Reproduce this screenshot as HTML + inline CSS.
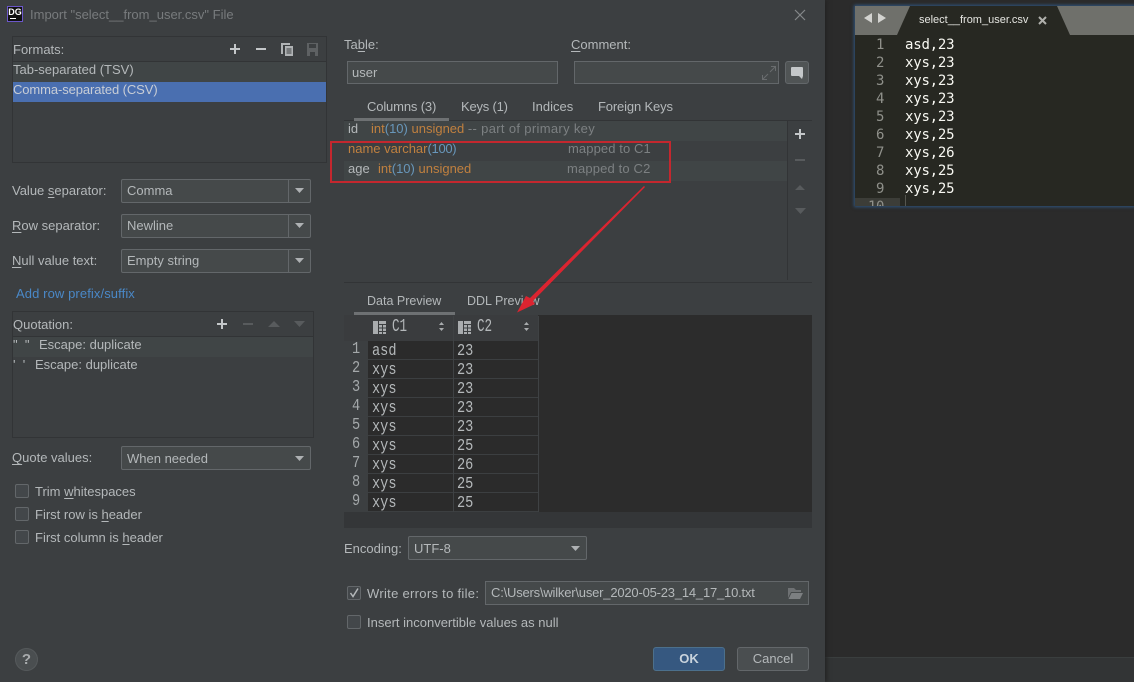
<!DOCTYPE html>
<html><head><meta charset="utf-8"><style>
html,body{margin:0;padding:0;background:#2b2b2b}
#p{position:relative;width:1134px;height:682px;overflow:hidden;background:#2b2b2b;font:13px/16px "Liberation Sans","Noto Sans CJK SC",sans-serif;color:#b4b8ba;letter-spacing:0}
#p div,#p span.a,#p svg{position:absolute}
.t{white-space:nowrap}
.b{box-sizing:border-box;border:1px solid #63676a;border-radius:2px;background:#45494a}
.o{color:#c0803f}.n{color:#6897bb}.g{color:#7c8082}
.c{font:14px/18px "DejaVu Sans Mono","Liberation Mono",monospace;letter-spacing:-.4px;color:#a9b7c6}
.gm{font:17px/19px "Liberation Mono",monospace;white-space:pre;transform:scaleX(.8);transform-origin:0 0;color:#b4b8ba}
u{text-underline-offset:2px}
.ck{box-sizing:border-box;width:14px;height:14px;border:1px solid #63676a;border-radius:2px;background:#43474a}
</style></head><body><div id="p">

<div style="left:825px;top:0;width:309px;height:682px;background:#2b2b2b"></div>
<div style="left:825px;top:657px;width:309px;height:25px;background:#323435;border-top:1px solid #3a3e3e;box-sizing:border-box"></div>

<div style="left:855px;top:6px;width:279px;height:200px;background:#272822;box-shadow:0 0 3px 1px #2f557f"></div>
<div style="left:855px;top:6px;width:279px;height:29px;background:#6f706b"></div>
<svg style="left:855px;top:6px" width="279" height="29"><path d="M42 29 L55 0 H202 L215 29Z" fill="#272822"/><path d="M9 12 L17 7 V17Z M23 7 L31 12 L23 17Z" fill="#d3d3d0"/><path d="M184 11l7 7m0-7l-7 7" stroke="#b0b0ac" stroke-width="2"/></svg>
<div class="t" style="left:919px;top:12px;font-size:11px;letter-spacing:0;color:#e6e6e2">select__from_user.csv</div>
<div style="left:855px;top:198px;width:45px;height:8px;background:#3c3d38"></div>
<div style="left:905px;top:195px;width:1px;height:11px;background:#55564f"></div>
<div class="t" style="left:855px;top:36px;width:279px;height:170px;overflow:hidden;position:absolute;background:none">
<div class="c" style="left:0;top:0;width:29px;text-align:right;color:#8f908a;white-space:pre;line-height:18px">1
2
3
4
5
6
7
8
9
10</div>
<div class="c" style="left:50px;top:0;color:#f8f8f2;white-space:pre;line-height:18px;letter-spacing:-.2px">asd,23
xys,23
xys,23
xys,23
xys,23
xys,25
xys,26
xys,25
xys,25</div></div>

<div style="left:0;top:0;width:825px;height:682px;background:#3c3f41;box-shadow:2px 0 4px #242424"></div>

<div style="left:7px;top:6px;width:16px;height:16px;box-sizing:border-box;border:1px solid #6b57c9;background:#111;color:#fff;font:bold 9px/11px 'Liberation Sans',sans-serif;letter-spacing:0;text-align:center">DG<div style="left:2px;top:11px;width:6px;height:1px;background:#fff"></div></div>
<div class="t" style="left:30px;top:7px;color:#787b7d">Import "select__from_user.csv" File</div>
<svg style="left:793px;top:8px" width="14" height="14"><path d="M2 2l10 10m0-10L2 12" stroke="#85888a" stroke-width="1.2"/></svg>

<div style="left:12px;top:36px;width:315px;height:127px;box-sizing:border-box;border:1px solid #323436"></div>
<div style="left:13px;top:61px;width:313px;height:1px;background:#323436"></div>
<div style="left:13px;top:62px;width:313px;height:20px;background:#404546"></div>
<div style="left:13px;top:82px;width:313px;height:20px;background:#4a6fb0"></div>
<div class="t" style="left:13px;top:42px">Formats:</div>
<div class="t" style="left:13px;top:62px">Tab-separated (TSV)</div>
<div class="t" style="left:13px;top:82px;color:#c8cdd5;letter-spacing:-.1px">Comma-separated (CSV)</div>
<svg style="left:228px;top:40px" width="94" height="18"><path d="M7 4v10M2 9h10" stroke="#c4c7c9" stroke-width="2"/><path d="M28 9h10" stroke="#c4c7c9" stroke-width="2"/>
<path d="M53 3h9v2h-7v9h-2z" fill="#b0b3b5"/><path d="M57 6h8v10h-8z" fill="#b0b3b5"/><path d="M58.500 9h5M58.500 11h5M58.500 13h5" stroke="#3c3f41"/>
<path d="M79 3h11v13H79z" fill="#5e6163"/><path d="M81 4h7v4h-7zM82 12h5v4h-5z" fill="#3c3f41"/></svg>

<div class="t" style="left:12px;top:183px"><span>Value <u>s</u>eparator:</span></div>
<div class="t" style="left:12px;top:218px"><u>R</u>ow separator:</div>
<div class="t" style="left:12px;top:253px"><u>N</u>ull value text:</div>

<div class="b" style="left:121px;top:179px;width:190px;height:24px"></div><div style="left:288px;top:180px;width:1px;height:22px;background:#63676a"></div>
<div class="t" style="left:127px;top:183px">Comma</div>
<div class="b" style="left:121px;top:214px;width:190px;height:24px"></div><div style="left:288px;top:215px;width:1px;height:22px;background:#63676a"></div>
<div class="t" style="left:127px;top:218px">Newline</div>
<div class="b" style="left:121px;top:249px;width:190px;height:24px"></div><div style="left:288px;top:250px;width:1px;height:22px;background:#63676a"></div>
<div class="t" style="left:127px;top:253px">Empty string</div>
<svg style="left:295px;top:188px" width="10" height="80"><path d="M0 0h9l-4.500 5zM0 35h9l-4.500 5zM0 70h9l-4.500 5z" fill="#aeb1b3"/></svg>

<div class="t" style="left:16px;top:286px;color:#4a88c7;letter-spacing:.1px">Add row prefix/suffix</div>

<div style="left:12px;top:311px;width:302px;height:127px;box-sizing:border-box;border:1px solid #323436"></div>
<div style="left:13px;top:336px;width:300px;height:1px;background:#323436"></div>
<div style="left:13px;top:337px;width:300px;height:20px;background:#404546"></div>
<div class="t" style="left:13px;top:317px">Quotation:</div>
<div class="t" style="left:13px;top:337px;white-space:pre">"  "</div>
<div class="t" style="left:39px;top:337px">Escape: duplicate</div>
<div class="t" style="left:13px;top:357px;white-space:pre">'  '</div>
<div class="t" style="left:35px;top:357px">Escape: duplicate</div>
<svg style="left:215px;top:315px" width="94" height="18"><path d="M7 4v10M2 9h10" stroke="#c4c7c9" stroke-width="2"/><path d="M28 9h10" stroke="#585b5d" stroke-width="2"/><path d="M53 12l6-6 6 6zM79 6h11l-5.500 6z" fill="#585b5d"/></svg>

<div class="t" style="left:12px;top:450px"><u>Q</u>uote values:</div>
<div class="b" style="left:121px;top:446px;width:190px;height:24px"></div>
<div class="t" style="left:127px;top:451px">When needed</div>
<svg style="left:295px;top:456px" width="10" height="6"><path d="M0 0h9l-4.500 5z" fill="#aeb1b3"/></svg>

<div class="ck" style="left:15px;top:484px"></div><div class="t" style="left:35px;top:484px">Trim <u>w</u>hitespaces</div>
<div class="ck" style="left:15px;top:507px"></div><div class="t" style="left:35px;top:507px">First row is <u>h</u>eader</div>
<div class="ck" style="left:15px;top:530px"></div><div class="t" style="left:35px;top:530px">First column is <u>h</u>eader</div>

<div style="left:15px;top:648px;width:23px;height:23px;border-radius:50%;background:#4a4e50;border:0;box-shadow:inset 0 0 0 1px #55595b;color:#a8abad;font:bold 15px/23px 'Liberation Sans',sans-serif;text-align:center">?</div>

<div class="t" style="left:344px;top:37px">Ta<u>b</u>le:</div>
<div class="t" style="left:571px;top:37px"><u>C</u>omment:</div>
<div class="b" style="left:347px;top:61px;width:211px;height:23px;border-radius:0"></div>
<div class="t" style="left:352px;top:65px">user</div>
<div class="b" style="left:574px;top:61px;width:205px;height:23px;border-radius:0"></div>
<svg style="left:761px;top:65px" width="16" height="16"><path d="M9 7l5-5M10 1.500h4.500V6M7 9l-5 5M1.500 10v4.500H6" stroke="#696c6e" fill="none"/></svg>
<div class="b" style="left:785px;top:61px;width:24px;height:23px;border-radius:3px;background:#505455"></div>
<svg style="left:790px;top:66px" width="14" height="14"><path d="M2 1h10a1 1 0 0 1 1 1v8l-1 3-3-3H2a1 1 0 0 1-1-1V2a1 1 0 0 1 1-1z" fill="#c4c7c9"/></svg>

<div class="t" style="left:367px;top:99px;letter-spacing:-.15px">Columns (3)</div>
<div class="t" style="left:461px;top:99px;letter-spacing:-.2px">Keys (1)</div>
<div class="t" style="left:532px;top:99px">Indices</div>
<div class="t" style="left:598px;top:99px;letter-spacing:-.15px">Foreign Keys</div>
<div style="left:344px;top:120px;width:468px;height:1px;background:#323436"></div>
<div style="left:354px;top:118px;width:95px;height:3px;background:#6e7173"></div>

<div style="left:344px;top:121px;width:443px;height:20px;background:#404546"></div>
<div style="left:344px;top:161px;width:443px;height:20px;background:#404546"></div>
<div style="left:787px;top:121px;width:1px;height:159px;background:#323436"></div>
<div style="left:344px;top:282px;width:468px;height:1px;background:#323436"></div>
<svg style="left:792px;top:126px" width="16" height="94"><path d="M8 3v10M3 8h10" stroke="#c4c7c9" stroke-width="2"/><path d="M3 34h10" stroke="#585b5d" stroke-width="2"/><path d="M3 64l5-5 5 5zM3 82h11l-5.500 6z" fill="#585b5d"/></svg>

<div class="t" style="left:348px;top:121px">id</div>
<div class="t" style="left:371px;top:121px"><span class="o">int</span><span class="n">(10)</span> <span class="o">unsigned</span> <span class="g" style="letter-spacing:.33px">-- part of primary key</span></div>
<div class="t" style="left:348px;top:141px"><span class="o">name varchar</span><span class="n" style="letter-spacing:-.3px">(100)</span></div>
<div class="t g" style="left:568px;top:141px;letter-spacing:.1px">mapped to C1</div>
<div class="t" style="left:348px;top:161px">age</div>
<div class="t" style="left:378px;top:161px"><span class="o">int</span><span class="n">(10)</span> <span class="o">unsigned</span></div>
<div class="t g" style="left:567px;top:161px;letter-spacing:.15px">mapped to C2</div>

<div class="t" style="left:367px;top:293px;font-size:12.500px">Data Preview</div>
<div class="t" style="left:467px;top:293px;font-size:12.500px">DDL Preview</div>
<div style="left:354px;top:312px;width:101px;height:3px;background:#6e7173"></div>

<div style="left:344px;top:315px;width:468px;height:213px;background:#2c2c2c"></div>
<div style="left:344px;top:512px;width:468px;height:16px;background:#343638"></div>
<div style="left:344px;top:315px;width:194px;height:26px;background:#3a3c3e"></div>
<div style="left:344px;top:341px;width:24px;height:171px;background:#3c3f41"></div>
<div style="left:368px;top:341px;width:170px;height:171px;background:#2b2b2b;background-image:repeating-linear-gradient(to bottom,transparent 0,transparent 18px,#3c3f41 18px,#3c3f41 19px)"></div>
<div style="left:453px;top:316px;width:1px;height:196px;background:#3f4244"></div>
<div style="left:538px;top:316px;width:1px;height:196px;background:#3f4244"></div>

<svg style="left:372px;top:320px" width="160" height="14"><g fill="#a9acae"><path d="M1 1h5v13H1z"/><path d="M7 1h7v13H7z"/></g><path d="M7 4.500h7M7 8h7M7 11.500h7M10.500 4v10" stroke="#3c3f41"/><g transform="translate(85,0)"><g fill="#a9acae"><path d="M1 1h5v13H1z"/><path d="M7 1h7v13H7z"/></g><path d="M7 4.500h7M7 8h7M7 11.500h7M10.500 4v10" stroke="#3c3f41"/></g><path d="M67 5l2.500-3L72 5zM67 8h5l-2.500 3zM152 5l2.500-3L157 5zM152 8h5l-2.500 3z" fill="#a9acae"/></svg>
<div class="gm t" style="left:392px;top:318px;font-size:18px;transform:scaleX(.7)">C1</div>
<div class="gm t" style="left:477px;top:318px;font-size:18px;transform:scaleX(.7)">C2</div>

<div class="gm t" style="left:352px;top:340px;color:#a4a8aa">1
2
3
4
5
6
7
8
9</div>
<div class="gm t" style="left:372px;top:342px">asd
xys
xys
xys
xys
xys
xys
xys
xys</div>
<div class="gm t" style="left:457px;top:342px">23
23
23
23
23
25
26
25
25</div>

<div class="t" style="left:344px;top:541px">Encoding:</div>
<div class="b" style="left:408px;top:536px;width:179px;height:24px"></div>
<div class="t" style="left:414px;top:541px">UTF-8</div>
<svg style="left:571px;top:546px" width="10" height="6"><path d="M0 0h9l-4.500 5z" fill="#aeb1b3"/></svg>

<div class="ck" style="left:347px;top:586px"></div>
<svg style="left:349px;top:587px" width="11" height="12"><path d="M1.500 6l2.500 3.500L9 1.500" stroke="#b4b8ba" stroke-width="1.500" fill="none"/></svg>
<div class="t" style="left:367px;top:586px;letter-spacing:.3px">Write errors to file:</div>
<div class="b" style="left:485px;top:581px;width:324px;height:24px;border-radius:0"></div>
<div class="t" style="left:491px;top:585px;letter-spacing:-.2px">C:\Users\wilker\user_2020-05-23_14_17_10.txt</div>
<svg style="left:787px;top:586px" width="17" height="14"><path d="M1 2h6l2 2h5v2H4L1 12z" fill="#6e7173"/><path d="M4.500 7H16l-3 6H1.500z" fill="#7c7f81"/></svg>
<div class="ck" style="left:347px;top:615px"></div>
<div class="t" style="left:367px;top:615px">Insert inconvertible values as null</div>

<div style="left:653px;top:647px;width:72px;height:24px;box-sizing:border-box;border:1px solid #4c708c;border-radius:3px;background:#365880;color:#c9d3dc;font-weight:bold;text-align:center;line-height:22px">OK</div>
<div class="b" style="left:737px;top:647px;width:72px;height:24px;border-radius:3px;background:#4a4e50;text-align:center;line-height:22px">Cancel</div>

<svg style="left:0;top:0" width="825" height="330"><rect x="331" y="142" width="339" height="40" fill="none" stroke="#c4272e" stroke-width="2"/><path d="M644 186L645 187L533 301L535 304L517 312.500L526 296L530 298Z" fill="#dc2430"/></svg>
</div></body></html>
